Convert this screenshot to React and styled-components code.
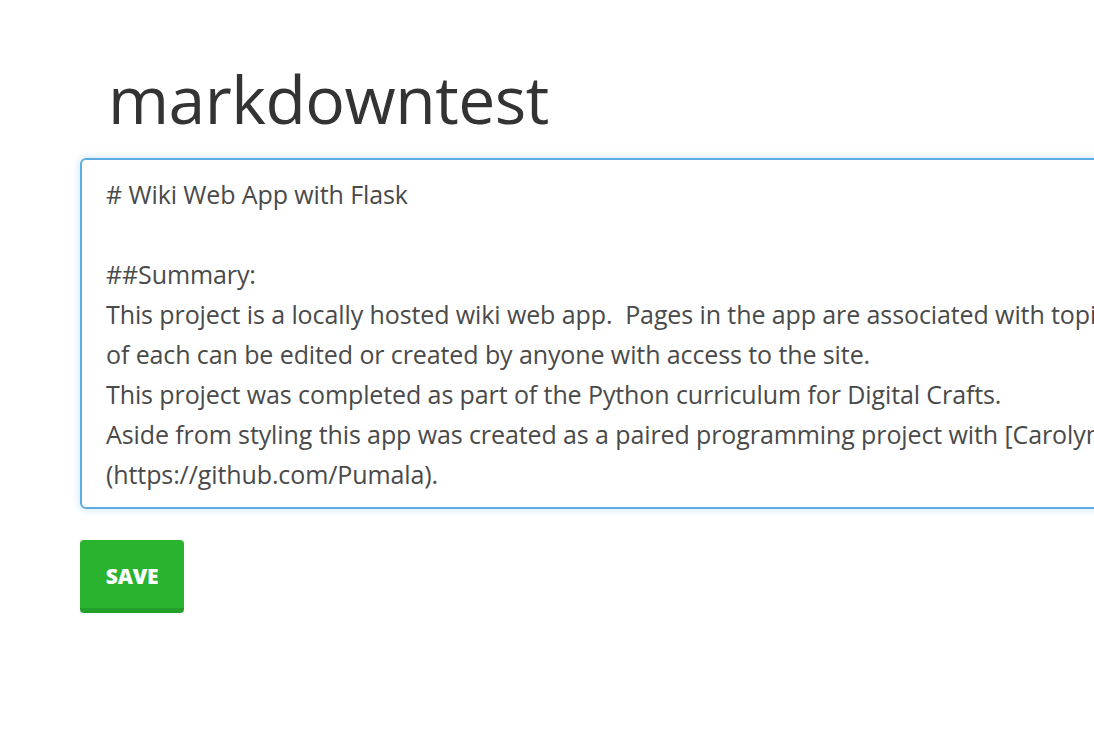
import React from "react";
import styled, { createGlobalStyle } from "styled-components";

const Global = createGlobalStyle`
  html, body { margin: 0; padding: 0; background: #fff; overflow: hidden; }
  body { font-family: "Open Sans", sans-serif; }
`;

const Page = styled.main`
  width: 1094px;
  height: 744px;
  overflow: hidden;
  padding: 53px 0 0 80px;
  box-sizing: border-box;
`;

const Title = styled.h1`
  margin: 0 0 15px 28px;
  font-family: "Open Sans", sans-serif;
  font-weight: 400;
  font-size: 66px;
  line-height: 90px;
  color: #333;
  letter-spacing: -0.5px;
`;

const Editor = styled.div`
  width: 1100px;
  box-sizing: border-box;
  border: 2px solid #5dade2;
  border-radius: 6px;
  box-shadow: 0 0 8px rgba(93, 173, 226, 0.35);
  padding: 14px 24px 13px 24px;
  font-family: "Open Sans", sans-serif;
  font-size: 25px;
  letter-spacing: -0.1px;
  line-height: 40px;
  color: #4a4a4a;
  white-space: pre;
  overflow: hidden;
`;

const Line = styled.div`
  height: 40px;
`;

const SaveButton = styled.button`
  margin-top: 31px;
  width: 104px;
  height: 73px;
  border: none;
  border-bottom: 5px solid #22a02a;
  border-radius: 4px;
  background: #29b32f;
  color: #fff;
  font-family: "Open Sans", sans-serif;
  font-weight: 800;
  font-size: 21px;
  letter-spacing: -0.3px;
  padding: 4px 0 0;
  cursor: pointer;
`;

const lines = [
  "# Wiki Web App with Flask",
  "",
  "##Summary:",
  "This project is a locally hosted wiki web app.  Pages in the app are associated with topics and the content",
  "of each can be edited or created by anyone with access to the site.",
  "This project was completed as part of the Python curriculum for Digital Crafts.",
  "Aside from styling this app was created as a paired programming project with [Carolyn](",
  "(https://github.com/Pumala).",
];

export default function App() {
  return (
    <>
      <Global />
      <Page>
        <Title>markdowntest</Title>
        <Editor>
          {lines.map((l, i) => (
            <Line key={i}>{l}</Line>
          ))}
        </Editor>
        <SaveButton>SAVE</SaveButton>
      </Page>
    </>
  );
}
